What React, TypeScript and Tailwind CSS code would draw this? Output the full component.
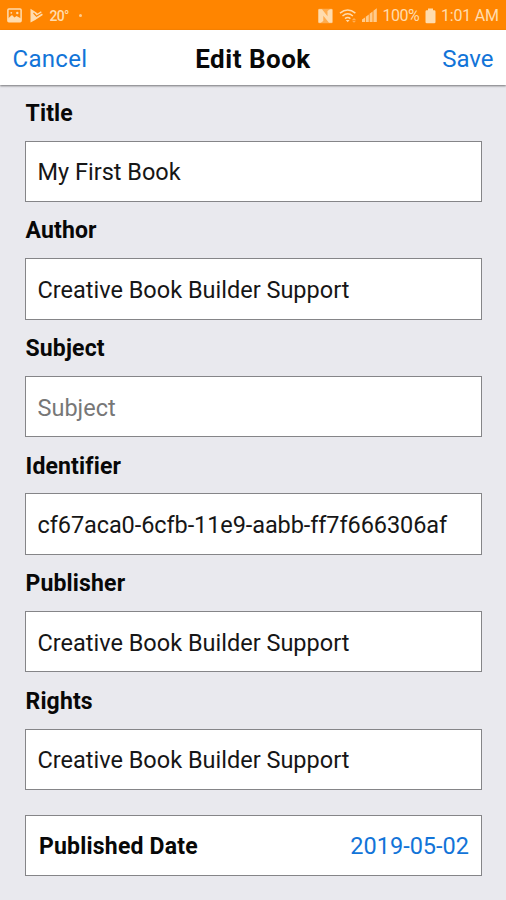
import React from "react";

type FieldProps = { label: string; value?: string; placeholder?: string; tight?: boolean };

function Field({ label, value, placeholder, tight }: FieldProps) {
  return (
    <label className="flex h-[117.6px] shrink-0 flex-col">
      <span className="flex h-[56.1px] items-center pt-[1.5px] pl-[0.5px] text-[23px] leading-none font-bold tracking-[0.15px] text-[#080808]">
        {label}
      </span>
      <input
        className={`h-[61.5px] w-full border border-[#858588] bg-white px-[11.5px] pt-[2px] text-[23.5px] text-[#161616] outline-none placeholder:text-[#777] ${tight ? "tracking-[-0.09px]" : ""}`}
        defaultValue={value}
        placeholder={placeholder}
      />
    </label>
  );
}

function StatusBar() {
  return (
    <div className="flex h-[30px] shrink-0 items-center bg-[#ff8500] pt-[1px] text-[#ffdcae]">
      <svg className="ml-[7px] h-[15px] w-[15px]" viewBox="0 0 15 15" fill="none">
        <rect x="0.9" y="1" width="13.2" height="12.8" rx="1" stroke="currentColor" strokeWidth="1.5" />
        <path d="M1 10.5 5 7 7.5 9.5l2-1.5L14 10.5V13H1z" fill="currentColor" />
        <circle cx="10.3" cy="5" r="1.2" fill="currentColor" />
        <circle cx="4.3" cy="4.8" r="0.9" fill="currentColor" />
      </svg>
      <svg className="ml-[8px] h-[15px] w-[13px]" viewBox="0 0 13 15" fill="currentColor">
        <path d="M.5.8 6 4.2 7.5 5.5 11 3.2 12.8 7 5.2 12 .5 14.4z" />
        <path d="m3.5 5 3 3.2 6-3.6" fill="none" stroke="#ff8500" strokeWidth="1.1" />
      </svg>
      <span className="ml-[6.5px] w-[20px] text-[14px] leading-none font-medium tracking-[-0.7px]">20°</span>
      <span className="ml-[9px] h-[3px] w-[3px] rounded-full bg-current opacity-80" />
      <div className="flex-1" />
      <svg className="h-[16px] w-[15px]" viewBox="0 0 15 16" fill="currentColor">
        <rect x="0" y="0.8" width="14.8" height="14.4" rx="1.2" opacity="0.45" />
        <path d="M.5 1.8Q.5 1.2 1.2 1.2H4L9.5 8.2V3l2.5-1.8h1.6q.7 0 .7.7v12.2q0 .7-.7.7H11L5.3 7.8V13l-2.5 1.8H1.2q-.7 0-.7-.7z" />
      </svg>
      <svg className="ml-[6px] h-[16px] w-[19px]" viewBox="0 0 19 16" fill="none" stroke="currentColor" strokeWidth="1.5">
        <path d="M1 5.2Q8.7-1.2 16.4 5.2M3.5 8Q8.7 3.6 13.9 8M6 10.6Q8.7 8.3 11.4 10.6" />
        <path d="m6.8 12 1.9 2.2 1.9-2.2z" fill="currentColor" stroke="none" />
        <path d="m13 12 2-2 2 2zM13 12.8l2 2 2-2z" fill="currentColor" stroke="none" opacity=".5" />
      </svg>
      <svg className="ml-[4px] h-[15px] w-[15px]" viewBox="0 0 15 15" fill="currentColor">
        <path d="M0 14v-2.5l3-2V14zM3.8 14V8.8l3-2.2V14zM7.6 14V5.8l3-2.3V14zM11.4 14V2.8L14.8.3V14z" opacity=".8" />
      </svg>
      <span className="ml-[5.5px] w-[36.5px] text-[16px] leading-none tracking-[-0.5px]">100%</span>
      <svg className="ml-[6px] h-[16px] w-[11px]" viewBox="0 0 11 16" fill="currentColor">
        <path d="M3 .5h5v1.7h1.2q1.3 0 1.3 1.3v10.6q0 1.2-1.3 1.2H1.8q-1.3 0-1.3-1.2V3.5q0-1.3 1.3-1.3H3z" />
      </svg>
      <span className="mr-[7px] ml-[5px] w-[58px] text-[16px] leading-none tracking-[-0.2px] whitespace-nowrap">
        1:01 AM
      </span>
    </div>
  );
}

export default function App() {
  return (
    <main className="flex h-[900px] w-[506px] flex-col overflow-hidden bg-[#e9e9ee] font-[Roboto,sans-serif]">
      <StatusBar />
      <header className="z-10 grid h-[54.5px] shrink-0 grid-cols-3 items-center bg-white px-[12.5px] pt-[3px] shadow-[0_1px_2px_rgba(0,0,0,0.5)]">
        <button className="text-left text-[24px] leading-none tracking-[0.3px] text-[#1274d8]">Cancel</button>
        <h1 className="text-center text-[26px] leading-none font-bold tracking-[0.5px] whitespace-nowrap text-[#080808]">
          Edit Book
        </h1>
        <button className="text-right text-[24px] leading-none text-[#1274d8]">Save</button>
      </header>
      <form className="flex flex-col pr-[24px] pl-[25px]">
        <Field label="Title" value="My First Book" />
        <Field label="Author" value="Creative Book Builder Support" />
        <Field label="Subject" placeholder="Subject" />
        <Field label="Identifier" value="cf67aca0-6cfb-11e9-aabb-ff7f666306af" tight />
        <Field label="Publisher" value="Creative Book Builder Support" />
        <Field label="Rights" value="Creative Book Builder Support" />
        <div className="mt-[24.5px] flex h-[61.5px] shrink-0 items-center justify-between border border-[#858588] bg-white pt-[2px] pr-[12px] pl-[13px]">
          <span className="pt-[1px] text-[23px] font-bold tracking-[0.2px] text-[#080808]">Published Date</span>
          <span className="text-[23.5px] text-[#1274d8]">2019-05-02</span>
        </div>
      </form>
    </main>
  );
}
